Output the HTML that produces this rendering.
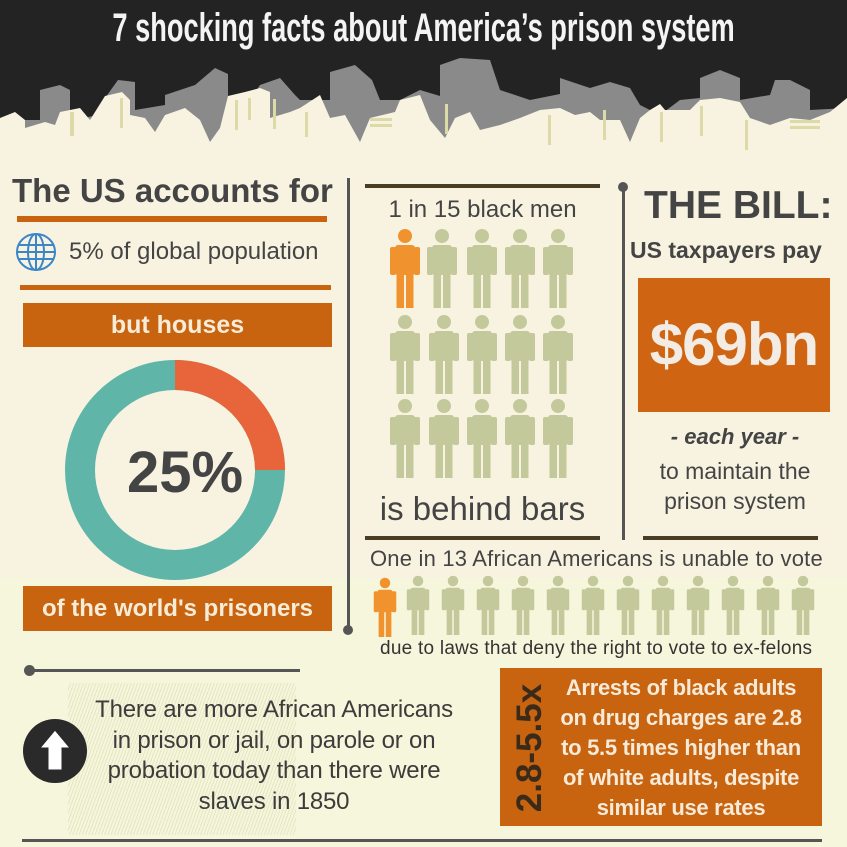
<!DOCTYPE html>
<html><head><meta charset="utf-8"><style>
*{margin:0;padding:0;box-sizing:border-box}
body{width:847px;height:847px;overflow:hidden;background:#f8f3e1;font-family:"Liberation Sans",sans-serif;position:relative;color:#444}
.a{position:absolute}
.t{white-space:nowrap}
.ob{background:#c8630f;color:#f6ecd8;font-weight:bold;text-align:center}
.ln{position:absolute;background:#4a3d25}
</style></head><body>
<div class="a" style="left:0;top:0;width:847px;height:150px;background:#232323"></div>
<svg class="a" style="left:0;top:55px" width="847" height="110" viewBox="0 55 847 110">
<path fill="#8a8a8a" d="M0 165 L0 120 L40 120 L40 90 L60 85 L70 90 L70 120 L100 115 L100 105 L118 80 L135 82 L135 110 L165 105 L165 95 L195 85 L215 68 L228 74 L228 100 L250 100 L260 85 L280 78 L295 95 L300 100 L330 100 L330 72 L355 65 L372 80 L380 100 L400 100 L420 90 L440 96 L440 65 L460 58 L490 60 L500 90 L530 100 L560 94 L560 78 L590 88 L610 82 L630 88 L640 105 L650 110 L660 115 L680 100 L700 98 L700 78 L720 70 L740 78 L740 100 L770 95 L775 80 L790 80 L810 90 L810 110 L847 108 L847 165 Z"/>
<path fill="#f8f3e1" d="M0 165 L0 118 L15 112 L25 120 L25 128 L45 122 L55 125 L60 112 L80 108 L90 120 L105 96 L122 92 L130 100 L130 115 L145 118 L155 132 L165 115 L185 108 L200 120 L210 142 L220 128 L228 96 L245 92 L260 88 L270 92 L270 118 L290 112 L300 108 L320 95 L330 118 L345 115 L360 142 L370 118 L395 112 L400 100 L420 95 L430 120 L445 138 L455 118 L470 112 L480 130 L500 125 L520 118 L540 110 L560 108 L575 115 L590 112 L600 120 L620 120 L630 142 L640 118 L650 110 L660 104 L665 110 L690 110 L700 100 L720 98 L740 102 L750 118 L770 125 L790 118 L810 120 L830 112 L847 98 L847 165 Z"/>
<g fill="#dcdba8">
<rect x="70" y="112" width="4" height="24"/><rect x="120" y="98" width="3" height="30"/><rect x="235" y="100" width="3" height="30"/><rect x="248" y="98" width="3" height="22"/><rect x="273" y="99" width="3" height="30"/><rect x="370" y="118" width="22" height="3"/><rect x="370" y="124" width="22" height="3"/><rect x="305" y="112" width="3" height="25"/><rect x="445" y="104" width="3" height="30"/><rect x="548" y="115" width="3" height="30"/><rect x="603" y="110" width="3" height="30"/><rect x="660" y="112" width="3" height="30"/><rect x="700" y="106" width="3" height="30"/><rect x="745" y="120" width="3" height="30"/><rect x="790" y="120" width="30" height="3"/><rect x="790" y="126" width="30" height="3"/>
</g>
</svg>
<div class="a t" style="left:-300px;width:1447px;top:6px;text-align:center;color:#f4f4f4;font-family:'Liberation Sans Narrow','Liberation Sans',sans-serif;font-weight:bold;font-size:40px;"><span style="display:inline-block;transform:scaleX(0.68)">7 shocking facts about America’s prison system</span></div>

<div class="a" style="left:0;top:578px;width:847px;height:269px;background:#f6f6dc"></div>

<!-- LEFT -->
<div class="a t" style="left:12px;top:172px;font-size:33px;font-weight:bold;color:#444">The US accounts for</div>
<div class="a" style="left:17px;top:216px;width:310px;height:6px;background:#c8630f"></div>
<svg class="a" style="left:14px;top:231px" width="44" height="42" viewBox="0 0 44 42"><g fill="none" stroke="#3a86c8" stroke-width="2"><ellipse cx="22" cy="21" rx="19" ry="18"/><ellipse cx="22" cy="21" rx="8" ry="18"/><line x1="22" y1="3" x2="22" y2="39"/><line x1="4" y1="14" x2="40" y2="14"/><line x1="3" y1="21" x2="41" y2="21"/><line x1="4" y1="28" x2="40" y2="28"/></g></svg>
<div class="a t" style="left:69px;top:238px;font-size:24px;color:#444">5% of global population</div>
<div class="a" style="left:20px;top:285px;width:311px;height:5px;background:#c8630f"></div>
<div class="a ob" style="left:23px;top:303px;width:309px;height:44px;font-size:25px;line-height:44px">but houses</div>
<svg class="a" style="left:60px;top:355px" width="230" height="230" viewBox="0 0 230 230">
<circle cx="115" cy="115" r="95" fill="none" stroke="#5fb5a8" stroke-width="30"/>
<path d="M115 5 A110 110 0 0 1 225 115 L195 115 A80 80 0 0 0 115 35 Z" fill="#e8643a"/>
<text x="125" y="137" text-anchor="middle" font-family="Liberation Sans" font-weight="bold" font-size="58" fill="#444">25%</text>
</svg>
<div class="a ob" style="left:23px;top:586px;width:309px;height:45px;font-size:24px;line-height:45px">of the world's prisoners</div>

<div class="a" style="left:347px;top:178px;width:3px;height:452px;background:#555"></div>
<div class="a" style="left:343px;top:625px;width:10px;height:10px;border-radius:50%;background:#555"></div>

<!-- MIDDLE -->
<svg width="0" height="0" style="position:absolute"><defs><symbol id="p" viewBox="0 0 30 80"><circle cx="15" cy="8" r="7"/><rect x="5" y="17" width="20" height="30" rx="3"/><rect x="0" y="19" width="6" height="28" rx="2"/><rect x="24" y="19" width="6" height="28" rx="2"/><rect x="6.5" y="44" width="7.5" height="36"/><rect x="16" y="44" width="7.5" height="36"/></symbol></defs></svg>
<div class="ln" style="left:365px;top:184px;width:235px;height:4px"></div>
<div class="a t" style="left:355px;width:255px;top:196px;text-align:center;font-size:24px">1 in 15 black men</div>
<svg class="a" style="left:385px;top:228px" width="200" height="255">
<g fill="#c3c99a">
<use href="#p" x="42" y="0" width="30" height="80"/><use href="#p" x="82" y="0" width="30" height="80"/><use href="#p" x="120" y="0" width="30" height="80"/><use href="#p" x="158" y="0" width="30" height="80"/>
<use href="#p" x="5" y="86" width="30" height="80"/><use href="#p" x="44" y="86" width="30" height="80"/><use href="#p" x="82" y="86" width="30" height="80"/><use href="#p" x="120" y="86" width="30" height="80"/><use href="#p" x="158" y="86" width="30" height="80"/>
<use href="#p" x="5" y="170" width="30" height="80"/><use href="#p" x="44" y="170" width="30" height="80"/><use href="#p" x="82" y="170" width="30" height="80"/><use href="#p" x="120" y="170" width="30" height="80"/><use href="#p" x="158" y="170" width="30" height="80"/>
</g>
<use href="#p" x="5" y="0" width="30" height="80" fill="#f0932f"/>
</svg>
<div class="a t" style="left:355px;width:255px;top:490px;text-align:center;font-size:33px">is behind bars</div>
<div class="ln" style="left:365px;top:536px;width:235px;height:4px"></div>

<!-- RIGHT -->
<div class="a" style="left:622px;top:186px;width:3px;height:354px;background:#555"></div>
<div class="a" style="left:618px;top:182px;width:10px;height:10px;border-radius:50%;background:#555"></div>
<div class="a t" style="left:644px;top:184px;font-size:39px;font-weight:bold;color:#444">THE BILL:</div>
<div class="a t" style="left:630px;top:237px;font-size:23px;font-weight:bold;color:#444">US taxpayers pay</div>
<div class="a ob" style="left:638px;top:278px;width:192px;height:134px;font-size:60px;line-height:134px;color:#f2ece4;background:#cf6512;letter-spacing:-1px">$69bn</div>
<div class="a t" style="left:630px;width:210px;top:424px;text-align:center;font-size:22px;font-weight:bold;font-style:italic">- each year -</div>
<div class="a t" style="left:630px;width:210px;top:458px;text-align:center;font-size:23px">to maintain the</div>
<div class="a t" style="left:630px;width:210px;top:488px;text-align:center;font-size:23px">prison system</div>
<div class="ln" style="left:643px;top:536px;width:175px;height:4px"></div>

<!-- vote row -->
<div class="a t" style="left:370px;top:546px;font-size:22px;color:#444;letter-spacing:0.2px">One in 13 African Americans is unable to vote</div>
<svg class="a" style="left:370px;top:575px" width="460" height="62">
<g fill="#c3c99a">
<use href="#p" x="35" y="0" width="26" height="60"/><use href="#p" x="70" y="0" width="26" height="60"/><use href="#p" x="105" y="0" width="26" height="60"/><use href="#p" x="140" y="0" width="26" height="60"/><use href="#p" x="175" y="0" width="26" height="60"/><use href="#p" x="210" y="0" width="26" height="60"/><use href="#p" x="245" y="0" width="26" height="60"/><use href="#p" x="280" y="0" width="26" height="60"/><use href="#p" x="315" y="0" width="26" height="60"/><use href="#p" x="350" y="0" width="26" height="60"/><use href="#p" x="385" y="0" width="26" height="60"/><use href="#p" x="420" y="0" width="26" height="60"/>
</g>
<use href="#p" x="2" y="2" width="26" height="60" fill="#f0932f"/>
</svg>
<div class="a t" style="left:380px;top:638px;font-size:19px;color:#333;letter-spacing:0.25px">due to laws that deny the right to vote to ex-felons</div>

<!-- bottom -->
<div class="a" style="left:28px;top:669px;width:272px;height:3px;background:#555"></div>
<div class="a" style="left:24px;top:665px;width:11px;height:11px;border-radius:50%;background:#555"></div>
<div class="a" style="left:68px;top:683px;width:228px;height:152px;background:repeating-linear-gradient(110deg,#f6f6dc 0 2px,#e4e6c4 2px 3px)"></div>
<svg class="a" style="left:22px;top:718px" width="66" height="66" viewBox="0 0 66 66"><circle cx="33" cy="33" r="32" fill="#2a2a2a"/><path d="M33 12 L48 30 L40 30 L40 52 L26 52 L26 30 L18 30 Z" fill="#fff" stroke="#2a2a2a" stroke-width="1"/></svg>
<div class="a" style="left:54px;top:695px;width:440px;text-align:center;font-size:24px;line-height:30.5px;color:#3c3c3c;letter-spacing:-0.2px">There are more African Americans<br>in prison or jail, on parole or on<br>probation today than there were<br>slaves in 1850</div>
<div class="a" style="left:500px;top:668px;width:322px;height:158px;background:#c8630f"></div>
<div class="a t" style="left:450px;top:728px;width:160px;height:40px;text-align:center;font-size:35px;font-weight:bold;color:#3a2a1a;transform:rotate(-90deg);line-height:40px">2.8-5.5x</div>
<div class="a" style="left:540px;top:673px;width:282px;text-align:center;font-size:22px;font-weight:bold;line-height:30px;color:#f6ead8;letter-spacing:-0.3px">Arrests of black adults<br>on drug charges are 2.8<br>to 5.5 times higher than<br>of white adults, despite<br>similar use rates</div>
<div class="a" style="left:22px;top:839px;width:800px;height:3px;background:#555"></div>
</body></html>
